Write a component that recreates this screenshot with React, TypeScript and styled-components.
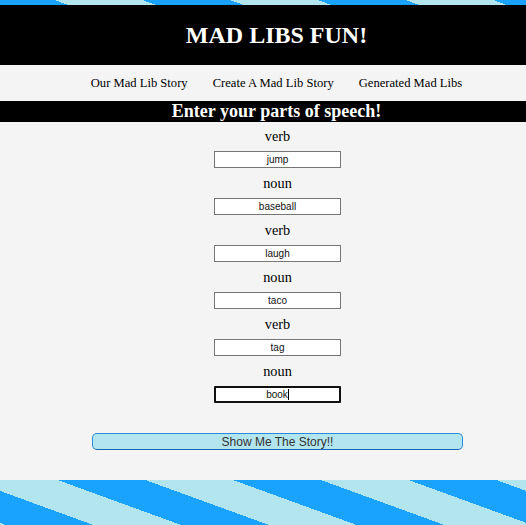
import React from "react";
import styled, { createGlobalStyle } from "styled-components";

const GlobalStyle = createGlobalStyle`
  html {
    background: repeating-linear-gradient(
      20deg,
      #b3e5ee 0px,
      #b3e5ee 2px,
      #19a3fe 2px,
      #19a3fe 32px,
      #b3e5ee 32px,
      #b3e5ee 60px
    );
    background-attachment: fixed;
    min-height: 100%;
  }
  body {
    margin: 0;
    font-family: "Liberation Serif", "Times New Roman", serif;
  }
`;

const Page = styled.div`
  padding-top: 5px;
  display: flex;
  flex-direction: column;
`;

const Header = styled.header`
  background: #000;
  height: 60px;
  display: flex;
  align-items: center;
  justify-content: center;
  padding-left: 27px;
`;

const Title = styled.h1`
  margin: 0;
  color: #fff;
  font-size: 24px;
  font-weight: bold;
  line-height: 28px;
`;

const Nav = styled.nav`
  background: #f4f4f4;
  height: 36px;
  display: flex;
  align-items: center;
  justify-content: center;
  gap: 25px;
  padding-left: 27px;
`;

const NavLink = styled.a`
  color: #000;
  text-decoration: none;
  font-size: 12.6px;
  line-height: 15px;
`;

const SectionHeading = styled.h2`
  margin: 0;
  background: #000;
  color: #fff;
  font-size: 18px;
  font-weight: bold;
  line-height: 21px;
  height: 21px;
  text-align: center;
  padding-left: 27px;
`;

const Form = styled.form`
  background: #f4f4f4;
  padding: 6px 0 30px 29px;
  display: flex;
  flex-direction: column;
  align-items: center;
`;

const Fields = styled.div`
  display: flex;
  flex-direction: column;
  align-items: center;
  gap: 7px;
`;

const Group = styled.div`
  display: flex;
  flex-direction: column;
  align-items: center;
  gap: 7px;
`;

const Label = styled.label`
  font-size: 14.3px;
  line-height: 16px;
  height: 16px;
  color: #000;
`;

const TextField = styled.input`
  box-sizing: border-box;
  width: 127px;
  height: 17px;
  margin: 0;
  padding: 0 2px;
  border: 1px solid #767676;
  background: #fff;
  font-family: "Liberation Sans", Arial, sans-serif;
  font-size: 10px;
  color: #111;
  text-align: center;
  outline: none;
`;

const FocusedField = styled.div`
  box-sizing: border-box;
  width: 127px;
  height: 17px;
  border: 2px solid #101010;
  border-radius: 1px;
  background: #fff;
  font-family: "Liberation Sans", Arial, sans-serif;
  font-size: 10px;
  line-height: 13px;
  color: #111;
  display: flex;
  justify-content: center;
  align-items: center;
`;

const Caret = styled.span`
  display: inline-block;
  width: 1px;
  height: 11px;
  background: #000;
`;

const StoryButton = styled.button`
  margin-top: 30px;
  box-sizing: border-box;
  width: 371px;
  height: 17px;
  padding: 0;
  background: #b3e5ee;
  border: 1px solid #2a8ad8;
  border-bottom-color: #1465b2;
  border-radius: 5px;
  font-family: "Liberation Sans", Arial, sans-serif;
  font-size: 12px;
  line-height: 14px;
  color: #333;
  cursor: pointer;
`;

const fields = [
  { label: "verb", value: "jump" },
  { label: "noun", value: "baseball" },
  { label: "verb", value: "laugh" },
  { label: "noun", value: "taco" },
  { label: "verb", value: "tag" },
  { label: "noun", value: "book", focused: true },
];

export default function App() {
  return (
    <>
      <GlobalStyle />
      <Page>
        <Header>
          <Title>MAD LIBS FUN!</Title>
        </Header>
        <Nav>
          <NavLink href="#">Our Mad Lib Story</NavLink>
          <NavLink href="#">Create A Mad Lib Story</NavLink>
          <NavLink href="#">Generated Mad Libs</NavLink>
        </Nav>
        <SectionHeading>Enter your parts of speech!</SectionHeading>
        <Form onSubmit={(e) => e.preventDefault()}>
          <Fields>
            {fields.map((f, i) => (
              <Group key={i}>
                <Label>{f.label}</Label>
                {f.focused ? (
                  <FocusedField>
                    {f.value}
                    <Caret />
                  </FocusedField>
                ) : (
                  <TextField defaultValue={f.value} />
                )}
              </Group>
            ))}
          </Fields>
          <StoryButton type="submit">Show Me The Story!!</StoryButton>
        </Form>
      </Page>
    </>
  );
}
